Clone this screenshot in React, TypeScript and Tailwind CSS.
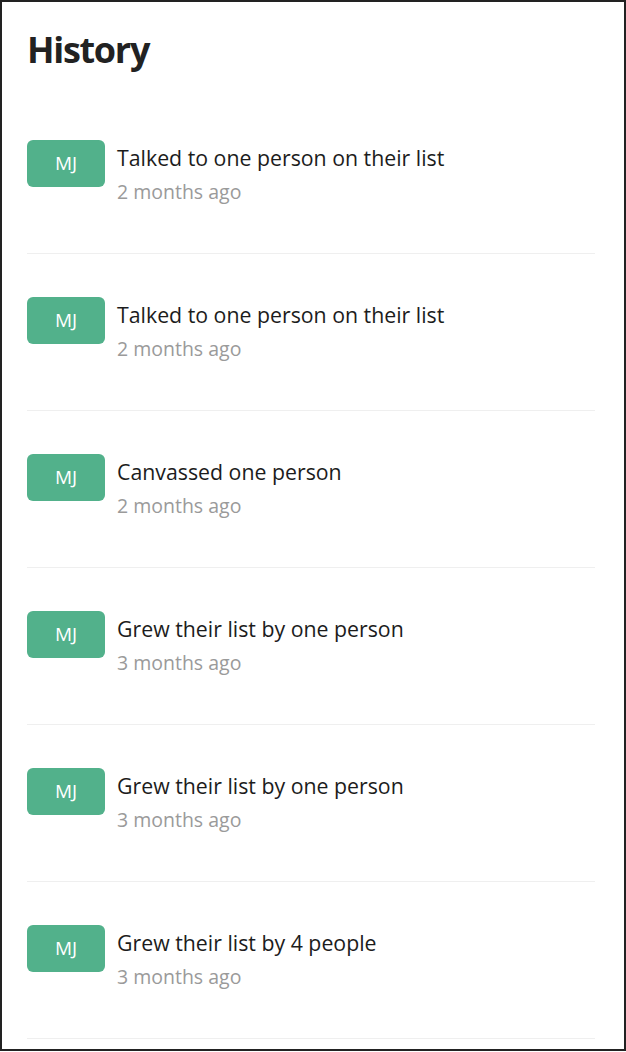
import React from 'react';

const history = [
  { text: 'Talked to one person on their list', when: '2 months ago' },
  { text: 'Talked to one person on their list', when: '2 months ago' },
  { text: 'Canvassed one person', when: '2 months ago' },
  { text: 'Grew their list by one person', when: '3 months ago' },
  { text: 'Grew their list by one person', when: '3 months ago' },
  { text: 'Grew their list by 4 people', when: '3 months ago' },
];

const App = () => {
  return (
    <div className="w-[626px] h-[1051px] border-2 border-[#222] bg-white font-['Open_Sans',sans-serif]">
      <div className="pl-[25px] pr-[29px]">
        {/* Heading */}
        <h1 className="h-[95px] pt-[26px] text-[36px] leading-[44px] font-bold text-[#222] tracking-[-1.3px]">
          History
        </h1>

        {/* Activity list */}
        <ul>
          {history.map((item, i) => (
            <li key={i} className="flex gap-3 pt-[43px] pb-[44px] border-b border-[#efefef]">
              <div className="w-[78px] h-[47px] shrink-0 rounded-md bg-[#52b18b] flex items-center justify-center text-white text-[19px]">
                MJ
              </div>
              <div>
                <p className="text-[21.3px] leading-[35px] text-[#1c1c1c]">{item.text}</p>
                <p className="text-[19.5px] leading-[34px] text-[#9a9a9a]">{item.when}</p>
              </div>
            </li>
          ))}
        </ul>
      </div>
    </div>
  );
};

export default App;
